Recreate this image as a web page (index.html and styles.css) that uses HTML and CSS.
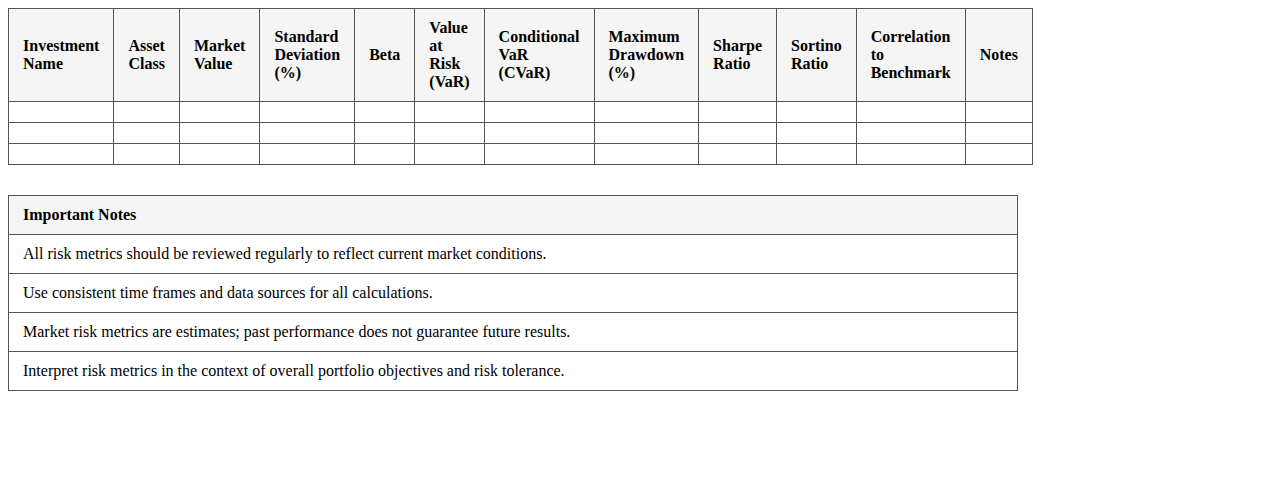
FILE: index.html
```html
<!DOCTYPE html>
<html lang="en">
<head>
<meta charset="utf-8">
<title>Market Risk Metrics</title>
<link rel="stylesheet" href="styles.css">
</head>
<body>
<table class="grid metrics">
  <thead>
    <tr>
      <th>Investment Name</th>
      <th>Asset Class</th>
      <th>Market Value</th>
      <th>Standard Deviation (%)</th>
      <th>Beta</th>
      <th>Value at Risk (VaR)</th>
      <th>Conditional VaR (CVaR)</th>
      <th>Maximum Drawdown (%)</th>
      <th>Sharpe Ratio</th>
      <th>Sortino Ratio</th>
      <th>Correlation to Benchmark</th>
      <th>Notes</th>
    </tr>
  </thead>
  <tbody>
    <tr><td></td><td></td><td></td><td></td><td></td><td></td><td></td><td></td><td></td><td></td><td></td><td></td></tr>
    <tr><td></td><td></td><td></td><td></td><td></td><td></td><td></td><td></td><td></td><td></td><td></td><td></td></tr>
    <tr><td></td><td></td><td></td><td></td><td></td><td></td><td></td><td></td><td></td><td></td><td></td><td></td></tr>
  </tbody>
</table>

<table class="grid notes">
  <thead>
    <tr><th>Important Notes</th></tr>
  </thead>
  <tbody>
    <tr><td>All risk metrics should be reviewed regularly to reflect current market conditions.</td></tr>
    <tr><td>Use consistent time frames and data sources for all calculations.</td></tr>
    <tr><td>Market risk metrics are estimates; past performance does not guarantee future results.</td></tr>
    <tr><td>Interpret risk metrics in the context of overall portfolio objectives and risk tolerance.</td></tr>
  </tbody>
</table>
</body>
</html>
```

FILE: styles.css
```css
body {
  margin: 8px;
  font-family: "Liberation Serif", "Times New Roman", serif;
  font-size: 16px;
  color: #000;
  background: #fff;
}

.grid {
  width: 80%;
  border-collapse: collapse;
}

.grid th,
.grid td {
  border: 1px solid #555;
  padding: 10px 14px;
  text-align: left;
  vertical-align: middle;
}

.grid th {
  background: #f5f5f5;
  font-weight: bold;
}

.metrics {
  margin-bottom: 30px;
}
```
